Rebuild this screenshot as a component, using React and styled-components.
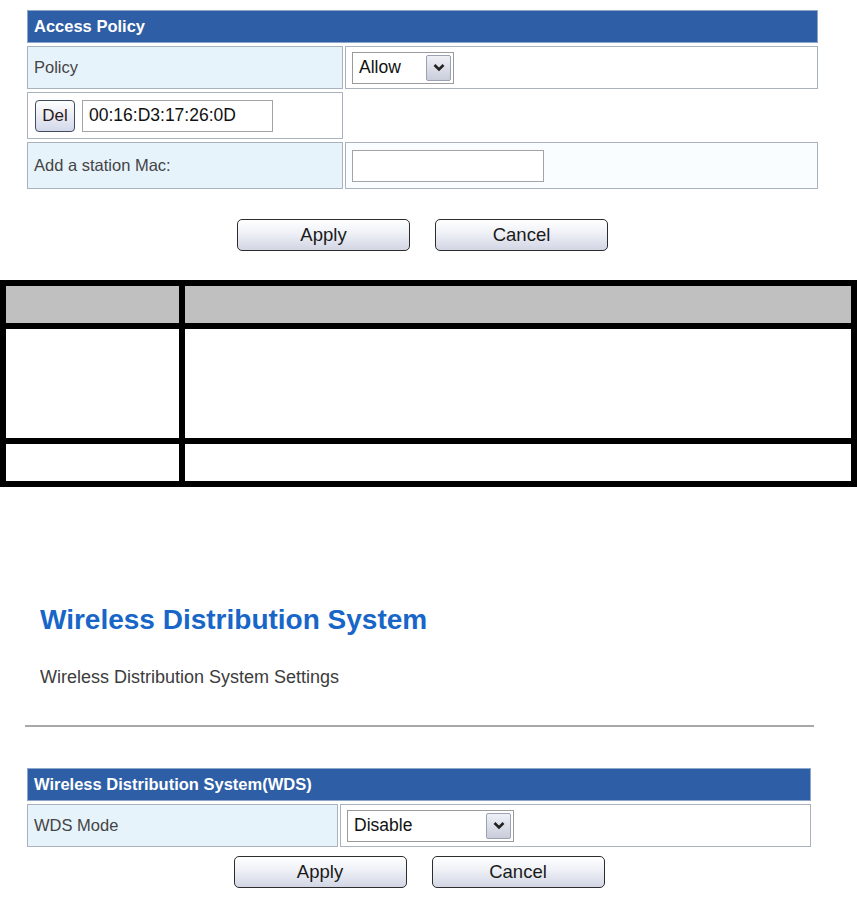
import React from "react";
import styled, { createGlobalStyle } from "styled-components";

const GlobalStyle = createGlobalStyle`
  html, body {
    margin: 0;
    padding: 0;
    background: #ffffff;
  }
  body {
    font-family: "Liberation Sans", Arial, sans-serif;
    color: #3a3a3a;
  }
`;

export const Page = styled.div`
  width: 857px;
  height: 915px;
  overflow: hidden;
  display: flex;
  flex-direction: column;
`;

export const Panel = styled.div`
  margin: ${(p) => p.$margin};
  width: ${(p) => p.$width}px;
`;

export const FormGrid = styled.div`
  display: grid;
  grid-template-columns: ${(p) => p.$columns};
  column-gap: 2px;
  row-gap: 3px;
`;

export const HeaderBar = styled.div`
  grid-column: 1 / -1;
  height: 33px;
  box-sizing: border-box;
  background: #2d5ea6;
  border: 1px solid #8ea6c8;
  color: #ffffff;
  font-weight: bold;
  font-size: 16.5px;
  display: flex;
  align-items: center;
  padding-left: 6px;
`;

export const Cell = styled.div`
  height: ${(p) => p.$height}px;
  box-sizing: border-box;
  border: 1px solid ${(p) => (p.$empty ? "transparent" : "#aab3bd")};
  background: ${(p) =>
    p.$label ? "#e7f3fb" : p.$tint ? "#fafdff" : "#ffffff"};
  display: flex;
  align-items: center;
  gap: ${(p) => (p.$tight ? 7 : 0)}px;
  padding-left: ${(p) => (p.$tight ? 7 : 6)}px;
  font-size: 16.5px;
  color: #444;
`;

export const SelectBox = styled.div`
  width: ${(p) => p.$width}px;
  height: 32px;
  box-sizing: border-box;
  border: 1px solid #9a9a9a;
  background: #fff;
  display: flex;
  align-items: center;
  justify-content: space-between;
  padding: 2px 2px 2px 6px;
  font-size: 17.5px;
  color: #111;
`;

export const ArrowBox = styled.span`
  width: 25px;
  height: 26px;
  box-sizing: border-box;
  border: 1px solid #9aa2b4;
  border-radius: 2px;
  background: linear-gradient(#eef0f6, #c9cdda);
  display: flex;
  align-items: center;
  justify-content: center;
`;

export const TextBox = styled.div`
  width: ${(p) => p.$width}px;
  height: 32px;
  box-sizing: border-box;
  border: 1px solid #a4a4a4;
  background: #fff;
  display: flex;
  align-items: center;
  padding-left: 6px;
  font-size: 17.5px;
  color: #111;
`;

export const SmallButton = styled.button`
  width: 40px;
  height: 32px;
  padding: 0;
  border: 1px solid #3f4c5c;
  border-radius: 4px;
  background: linear-gradient(#ffffff, #d3d8ea);
  font-family: inherit;
  font-size: 17px;
  color: #2a1a1a;
`;

export const ButtonRow = styled.div`
  display: flex;
  justify-content: center;
  gap: 25px;
  margin-top: ${(p) => p.$top}px;
`;

export const Button = styled.button`
  width: 173px;
  height: 32px;
  padding: 0;
  border: 1px solid #2c2c2c;
  border-radius: 5px;
  background: linear-gradient(#ffffff 0%, #eef0f6 45%, #d2d6e4 100%);
  font-family: inherit;
  font-size: 18.5px;
  color: #1a1a1a;
`;

export const BlackTable = styled.div`
  margin-top: 29px;
  display: grid;
  grid-template-columns: 173px 1fr;
  grid-template-rows: 37px 109px 37px;
  gap: 6px;
  padding: 6px;
  background: #000;
  width: 857px;
  box-sizing: border-box;
`;

export const TableCell = styled.div`
  background: ${(p) => (p.$head ? "#c0c0c0" : "#ffffff")};
`;

export const Title = styled.h1`
  margin: 119px 0 0 40px;
  font-size: 28px;
  line-height: 28px;
  font-weight: bold;
  color: #1766c8;
`;

export const Subtitle = styled.p`
  margin: 34px 0 0 40px;
  font-size: 18px;
  line-height: 18px;
  color: #3c3c3c;
`;

export const Divider = styled.hr`
  margin: 39px 0 0 25px;
  width: 789px;
  height: 0;
  border: none;
  border-top: 2px solid #a8a8a8;
`;

const Chevron = () => (
  <svg width="12" height="9" viewBox="0 0 12 9">
    <path d="M1.5 2 L6 6.5 L10.5 2" fill="none" stroke="#222" strokeWidth="2.6" />
  </svg>
);

const Select = ({ value, width }) => (
  <SelectBox $width={width}>
    <span>{value}</span>
    <ArrowBox>
      <Chevron />
    </ArrowBox>
  </SelectBox>
);

const App = () => {
  return (
    <Page>
      <GlobalStyle />
      <Panel $margin="10px 0 0 27px" $width={791}>
        <FormGrid $columns="316px 473px">
          <HeaderBar>Access Policy</HeaderBar>
          <Cell $label $height={43}>Policy</Cell>
          <Cell $height={43}>
            <Select value="Allow" width={102} />
          </Cell>
          <Cell $tight $height={47}>
            <SmallButton>Del</SmallButton>
            <TextBox $width={191}>00:16:D3:17:26:0D</TextBox>
          </Cell>
          <Cell $empty $height={47} />
          <Cell $label $height={47}>Add a station Mac:</Cell>
          <Cell $tint $height={47}>
            <TextBox $width={192} />
          </Cell>
        </FormGrid>
        <ButtonRow $top={30}>
          <Button>Apply</Button>
          <Button>Cancel</Button>
        </ButtonRow>
      </Panel>

      <BlackTable>
        <TableCell $head />
        <TableCell $head />
        <TableCell />
        <TableCell />
        <TableCell />
        <TableCell />
      </BlackTable>

      <Title>Wireless Distribution System</Title>
      <Subtitle>Wireless Distribution System Settings</Subtitle>
      <Divider />

      <Panel $margin="41px 0 0 27px" $width={784}>
        <FormGrid $columns="311px 471px">
          <HeaderBar>Wireless Distribution System(WDS)</HeaderBar>
          <Cell $label $height={43}>WDS Mode</Cell>
          <Cell $height={43}>
            <Select value="Disable" width={167} />
          </Cell>
        </FormGrid>
        <ButtonRow $top={9}>
          <Button>Apply</Button>
          <Button>Cancel</Button>
        </ButtonRow>
      </Panel>
    </Page>
  );
};

export default App;
